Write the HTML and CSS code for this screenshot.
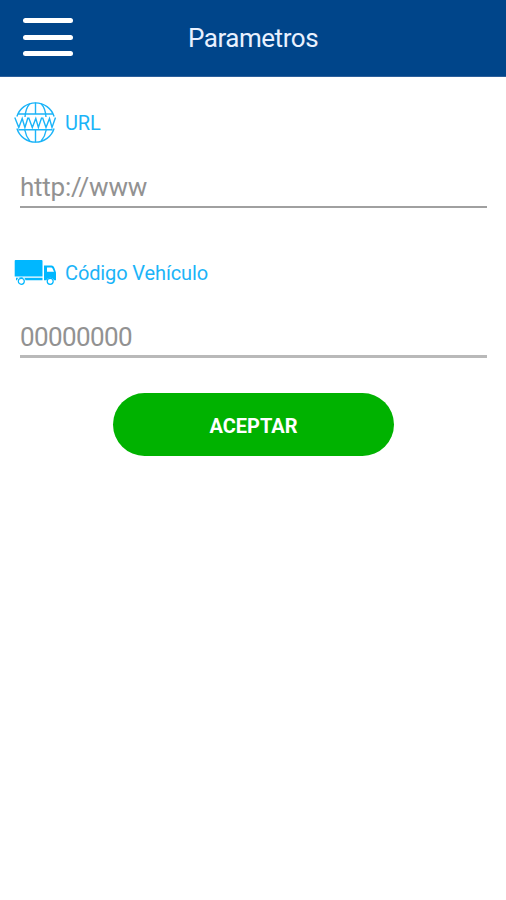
FILE: index.html
```html
<!DOCTYPE html>
<html lang="es">
<head>
<meta charset="utf-8">
<title>Parametros</title>
<link rel="stylesheet" href="styles.css">
</head>
<body>
<header class="bar">
  <button class="menu" aria-label="Menu"><span></span><span></span><span></span></button>
  <h1 class="title">Parametros</h1>
</header>
<main class="form">
  <section class="field">
    <label class="label" for="url">
      <svg class="icon" width="42" height="42" viewBox="0 0 42 42" fill="none" stroke="currentColor" stroke-width="1.400">
        <path d="M2.900 15.500a19.500 19.500 0 0 1 37.200 0M2.900 27.500a19.500 19.500 0 0 0 37.200 0M4.500 13h34M4.500 28.800h34"/>
        <path d="M21.500 1.500V13M21.500 29v12.500M15.800 2.800C12.800 6 11.500 9.500 11 16M27.200 2.800c3 3.200 4.300 6.700 4.800 13.200M10.800 29c.8 4.500 2.500 8 5 11M32.200 29c-.8 4.500-2.500 8-5 11"/>
        <path d="M.8 16.500l4 10L8.200 17.500l2.700 9L14 16.500M14.600 16.500l3.700 10 3.500-9 2.600 9 3.300-10M28.500 16.500l3.500 10 3.500-9 2.500 9 3.500-10"/>
      </svg>
      <span class="text">URL</span>
    </label>
    <input class="input" id="url" type="text" placeholder="http://www">
  </section>
  <section class="field vehicle">
    <label class="label" for="code">
      <svg class="icon" width="42" height="42" viewBox="0 0 42 42" fill="currentColor">
        <path d="M1.500 9h26q1 0 1 1v15.500H.7V10q0-1 .8-1zM2 26.800h26.500v2.400H11.500a4.400 4.400 0 0 0-8.500 0H2zM30 14.500h7.500c1.500 0 2.300 1 3 2.800l1.700 4.700v7.200h-2a4.400 4.400 0 0 0-8 0h-2.200zM33 16.500v4.300h7l-1.500-3.300c-.3-.7-.7-1-1.400-1z" fill-rule="evenodd"/>
        <g fill="none" stroke="currentColor" stroke-width="1.200"><circle cx="7.300" cy="30.300" r="3"/><circle cx="36.200" cy="30.300" r="3"/></g>
      </svg>
      <span class="text">Código Vehículo</span>
    </label>
    <input class="input" id="code" type="text" placeholder="00000000">
  </section>
  <button class="accept"><span class="accept-text">ACEPTAR</span></button>
</main>
</body>
</html>
```
FILE: styles.css
```css
* { box-sizing: border-box; }
body { margin: 0; min-height: 900px; background: #fff; font-family: Roboto, sans-serif; }
.bar {
  display: grid;
  grid-template-columns: 96px 1fr 96px;
  height: 77px;
  align-items: center;
  background: #00458a;
  border-bottom: 1px solid #2c5f9b;
}
.menu {
  display: flex;
  flex-direction: column;
  gap: 11.400px;
  width: 50px;
  margin: 0 0 2px 23px;
  padding: 0;
  border: 0;
  background: none;
}
.menu span { height: 5px; border-radius: 3px; background: #fff; }
.title {
  margin: 0;
  color: #e9f1ff;
  font-size: 26px;
  font-weight: 400;
  line-height: 30px;
  letter-spacing: -0.450px;
  text-align: center;
}
.form { display: flex; flex-direction: column; padding: 24px 19px 0 20px; }
.field { display: flex; flex-direction: column; height: 150px; }
.label {
  display: flex;
  align-items: center;
  gap: 9px;
  height: 42px;
  margin-left: -6px;
  color: #1cb4f8;
  font-size: 20px;
  letter-spacing: -0.120px;
}
.text { padding-top: 2px; }
.icon { flex: none; }
.vehicle .icon { color: #00b7ff; }
.input {
  height: 42px;
  margin-top: 23px;
  padding: 2px 0 0;
  border: 0;
  border-bottom: 2px solid #a0a0a0;
  border-radius: 0;
  outline: 0;
  background: none;
  font: 26px Roboto, sans-serif;
  letter-spacing: -0.250px;
}
.vehicle .input { border-bottom: 3px solid #b9b9b9; letter-spacing: -0.600px; }
.input::placeholder { color: #929292; opacity: 1; }
.accept {
  width: 281px;
  height: 63px;
  margin: -8px 0 0 93px;
  padding: 2px 0 0;
  border: 0;
  border-radius: 32px;
  background: #00b200;
  color: #fff;
  font: 700 20px Roboto, sans-serif;
}
```
